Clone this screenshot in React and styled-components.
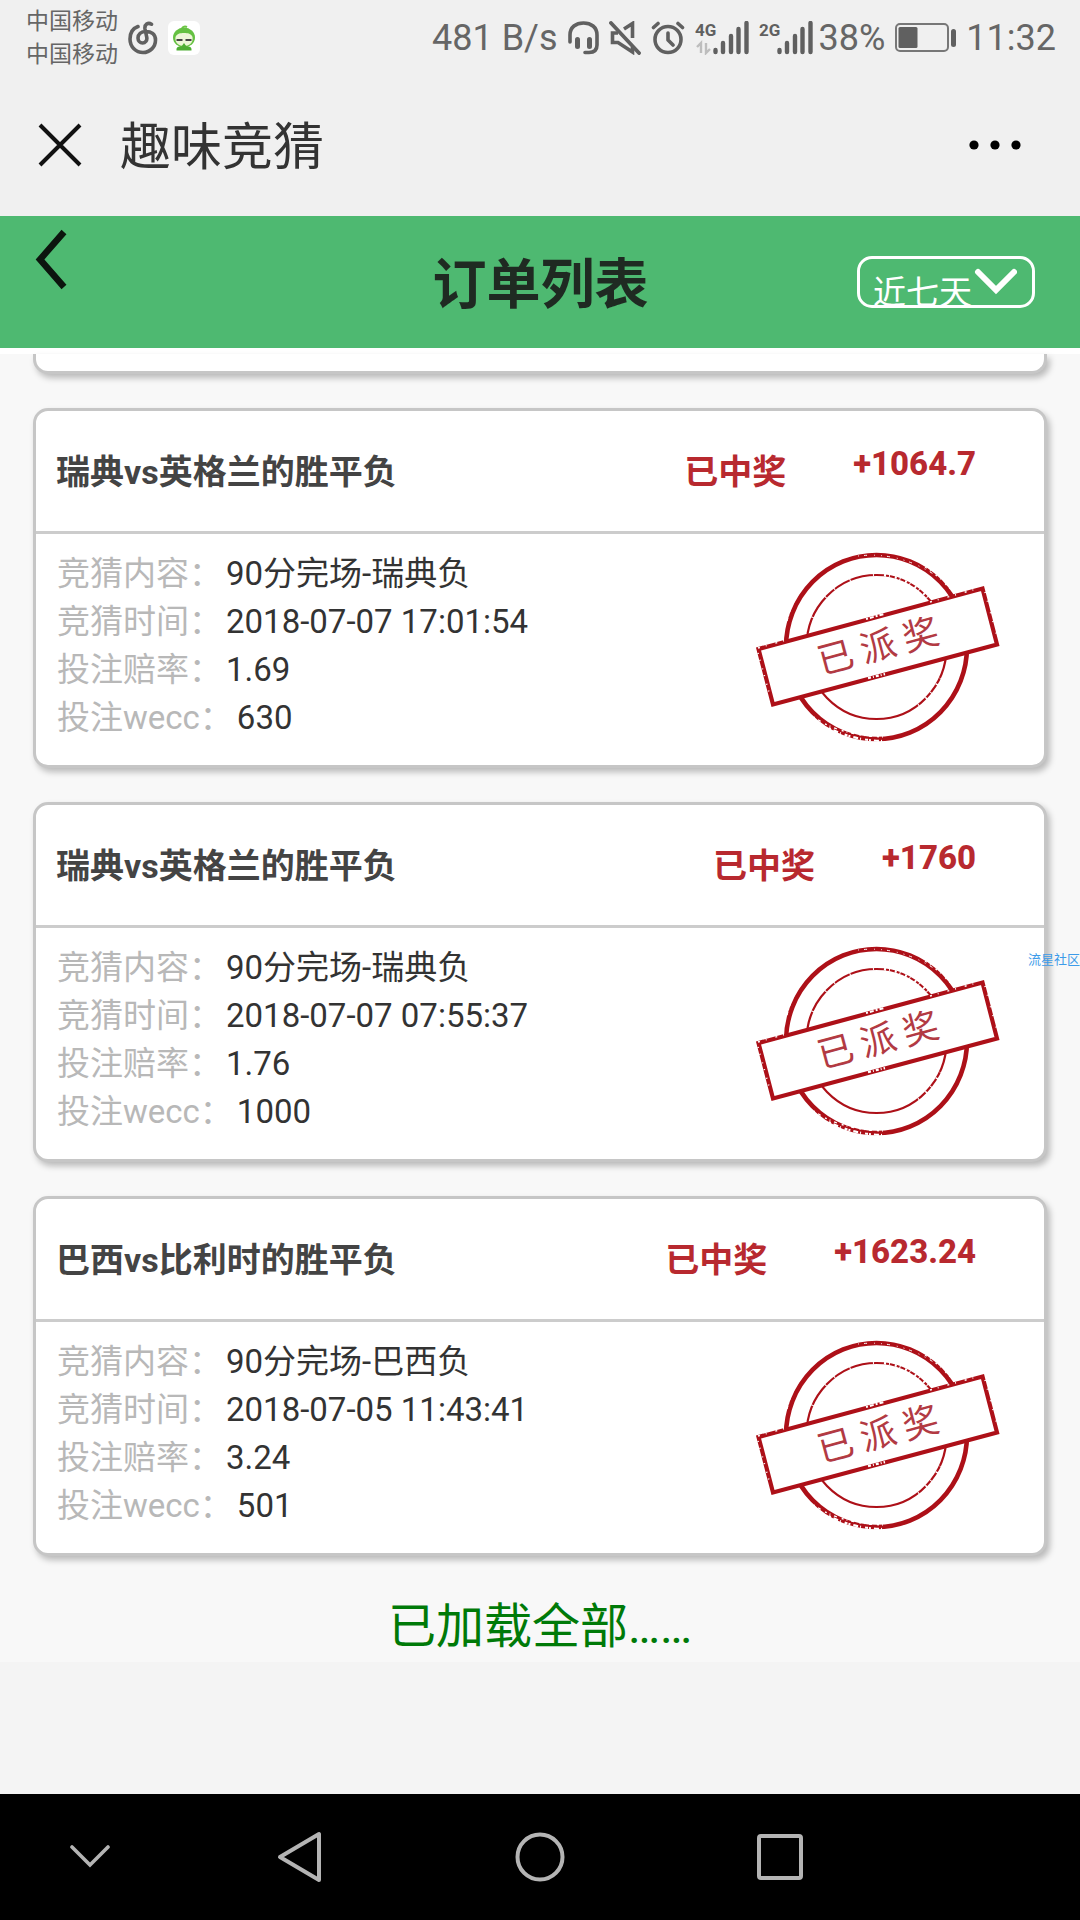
import React from 'react';
import styled, { createGlobalStyle } from 'styled-components';

const GlobalStyle = createGlobalStyle`
  * {
    box-sizing: border-box;
  }
  body {
    margin: 0;
    background: #f4f4f4;
    font-family: Roboto, 'Noto Sans CJK SC', sans-serif;
    color: #333;
  }
  button {
    padding: 0;
    border: none;
    background: none;
    display: flex;
    cursor: pointer;
  }
  svg {
    display: block;
    flex-shrink: 0;
  }
`;

const Page = styled.div`
  position: relative;
  min-height: 100vh;
  display: flex;
  flex-direction: column;
  overflow-x: hidden;
`;

const StatusBar = styled.div`
  height: 74px;
  padding: 2px 24px 0 26px;
  display: flex;
  align-items: center;
  justify-content: space-between;
  background: #f0f0f0;
  color: #666;
`;

const StatusGroup = styled.div`
  display: flex;
  align-items: center;
  gap: 10px;
`;

const Carriers = styled.div`
  font-size: 23px;
  line-height: 33px;
`;

const StatusText = styled.span`
  font-size: 36px;
  line-height: 44px;
  white-space: nowrap;
`;

const SignalGroup = styled.div`
  display: flex;
  align-items: center;
  gap: 6px;
`;

const AppBar = styled.header`
  height: 142px;
  padding: 0 59px 0 38px;
  display: flex;
  align-items: center;
  background: #f0f0f0;
`;

const AppTitle = styled.div`
  flex: 1;
  margin-left: 38px;
  padding-top: 6px;
  font-size: 51px;
  line-height: 72px;
`;

const Header = styled.div`
  height: 138px;
  padding: 0 45px 0 34px;
  display: grid;
  grid-template-columns: 1fr auto 1fr;
  align-items: center;
  background: #4eb971;
  border-bottom: 6px solid #fff;
`;

const BackButton = styled.button`
  align-self: start;
  justify-self: start;
  margin-top: 12px;
`;

const Title = styled.h1`
  margin: 0;
  padding: 8px 0 0 12px;
  font-size: 54px;
  line-height: 76px;
  color: #1f2a22;
`;

const RangeBox = styled.label`
  justify-self: end;
  width: 178px;
  height: 52px;
  padding: 0 15px 0 13px;
  display: flex;
  border: 3px solid #fff;
  border-radius: 15px;
`;

const RangeSelect = styled.select`
  appearance: none;
  flex: 1;
  min-width: 0;
  padding: 15px 0 0;
  border: none;
  outline: none;
  background: transparent;
  color: #fff;
  font-family: inherit;
  font-size: 33px;
  line-height: 38px;

  option {
    color: #333;
  }
`;

const List = styled.main`
  display: flex;
  flex-direction: column;
  gap: 34px;
  padding: 0 33px;
  background: #f8f8f8;
`;

const Card = styled.section`
  background: #fff;
  border: 3px solid #c6c6c6;
  border-radius: 15px;
  box-shadow: 3px 4px 6px rgba(0, 0, 0, 0.25);
`;

// bottom edge of the card scrolled under the header
const CardTail = styled(Card)`
  height: 20px;
  border-top: none;
  border-radius: 0 0 15px 15px;
`;

const CardHead = styled.div`
  height: 123px;
  padding: 36px 68px 0 20px;
  display: flex;
  align-items: flex-start;
  border-bottom: 3px solid #ccc;
`;

const CardTitle = styled.h2`
  flex: 1;
  margin: 0;
  font-size: 34px;
  line-height: 50px;
  color: #444;
`;

const State = styled.span`
  margin-right: 67px;
  font-size: 34px;
  font-weight: bold;
  line-height: 50px;
  color: #b8292f;
`;

const Amount = styled.span`
  font-size: 33px;
  font-weight: 800;
  line-height: 34px;
  color: #b8292f;
`;

const CardBody = styled.div`
  padding: 16px 40px 23px 21px;
  display: flex;
  justify-content: space-between;
`;

const Details = styled.dl`
  margin: 0;
  font-size: 33px;
  line-height: 48px;
`;

const Row = styled.div`
  display: flex;
  gap: 4px;
`;

const Label = styled.dt`
  color: #b8b8b8;
`;

const Value = styled.dd`
  margin: 0;
`;

const Loaded = styled.p`
  margin: 0;
  padding-top: 2px;
  font-size: 48px;
  line-height: 70px;
  text-align: center;
  color: #007a08;
`;

const Watermark = styled.span`
  position: absolute;
  top: 950px;
  right: 0;
  font-size: 13px;
  line-height: 20px;
  color: #3d9be9;
`;

const NavBar = styled.nav`
  height: 126px;
  margin-top: auto;
  display: grid;
  grid-template-columns: 3fr 4fr 4fr 4fr 3fr;
  align-items: center;
  justify-items: center;
  background: #000;
`;

const orders = [
  {
    title: '瑞典vs英格兰的胜平负',
    amount: '+1064.7',
    content: '90分完场-瑞典负',
    time: '2018-07-07 17:01:54',
    odds: '1.69',
    wecc: '630',
  },
  {
    title: '瑞典vs英格兰的胜平负',
    amount: '+1760',
    content: '90分完场-瑞典负',
    time: '2018-07-07 07:55:37',
    odds: '1.76',
    wecc: '1000',
  },
  {
    title: '巴西vs比利时的胜平负',
    amount: '+1623.24',
    content: '90分完场-巴西负',
    time: '2018-07-05 11:43:41',
    odds: '3.24',
    wecc: '501',
  },
];

const MusicIcon = () => (
  <svg width="30" height="34" viewBox="0 0 30 34" fill="none" stroke="#606060" strokeWidth="3.6" strokeLinecap="round">
    <path d="M10 5.500C4.500 7.500 2 12.500 2 18C2 26 8 31.500 15 31.500S27.500 26 27.500 19C27.500 13 23 10.500 18 10.500C13 10.500 10 13.500 10 17C10 20 12 22 14.600 22S19.300 19.700 18.800 16.500L17 8C16.300 3.500 20 1 23.500 3.200" />
  </svg>
);

const AvatarIcon = () => (
  <svg width="32" height="34" viewBox="0 0 32 34">
    <rect width="32" height="34" rx="6" fill="#fff" />
    <path d="M14 7.500C15 5.500 17 5 19 6" fill="none" stroke="#6cc644" strokeWidth="2" />
    <ellipse cx="16" cy="16.500" rx="11" ry="10" fill="#65c142" />
    <path d="M7.500 16C9 12.500 12 12 16 12S23 12.500 24.500 16C25.500 22 21 25 16 25S6.500 22 7.500 16Z" fill="#eef6d8" />
    <path d="M8.500 19h6M17.500 19h6" stroke="#444" strokeWidth="1.800" />
    <path d="M8.500 29.500C8 26 10 25 13.500 25.500L16 22L18.500 25.500C22 25 24 26 23.500 29.500Z" fill="#4fae34" />
  </svg>
);

const HeadsetIcon = () => (
  <svg width="31" height="34" viewBox="0 0 31 34" fill="none" stroke="#606060" strokeLinecap="round">
    <path d="M2 21V14C2 6 8 2 15.500 2S29 6 29 14V24C29 29 26 31.500 21 31.500H17" strokeWidth="3.600" />
    <path d="M9.500 18.500v7M21.500 18.500v7" strokeWidth="5" />
  </svg>
);

const MuteIcon = () => (
  <svg width="32" height="34" viewBox="0 0 32 34" fill="none" stroke="#606060" strokeWidth="3.600">
    <path d="M15 8L23.500 2.500V17M9 12H3.500V21.500H9L23.500 31V26" />
    <path d="M2 2L30 32" strokeWidth="3.800" strokeLinecap="round" />
  </svg>
);

const AlarmIcon = () => (
  <svg width="34" height="34" viewBox="0 0 34 34" fill="none" stroke="#606060" strokeWidth="3.600" strokeLinecap="round" strokeLinejoin="round">
    <circle cx="17" cy="18.500" r="13" />
    <path d="M17 12v7l5 5M2.500 6.500L7 2.500M31.500 6.500L27 2.500" />
  </svg>
);

const Signal = ({ type, data }) => (
  <svg width="54" height="34" viewBox="0 0 54 34">
    <text x="0" y="15" fontFamily="Roboto, sans-serif" fontSize="17" fontWeight="bold" fill="#606060">
      {type}
    </text>
    {data && (
      <path d="M6 32V22L2 26M11 22V32L15 28" fill="none" stroke="#bdbdbd" strokeWidth="2.400" />
    )}
    <path
      d="M20.500 29v2M28 22v9M36 15v16M43.500 8v23M51.500 2v29"
      stroke="#606060"
      strokeWidth="4.400"
      strokeLinecap="round"
    />
  </svg>
);

const BatteryIcon = () => (
  <svg width="61" height="30" viewBox="0 0 61 30">
    <rect x="1" y="1" width="52" height="27" rx="4" fill="none" stroke="#777" strokeWidth="2" />
    <rect x="3.500" y="4" width="19" height="21" rx="1.500" fill="#606060" />
    <rect x="56" y="6" width="5" height="18" rx="2.500" fill="#606060" />
  </svg>
);

const Stamp = () => (
  <svg width="252" height="192" viewBox="752 550 252 192" role="img" aria-label="已派奖">
    <g fill="none" stroke="#ad1018">
      <ellipse cx="876.500" cy="647" rx="90.500" ry="92" strokeWidth="4.600" />
      <ellipse cx="876.500" cy="647" rx="70" ry="72" strokeWidth="2.200" />
    </g>
    {/* worn ink */}
    <g fill="none" stroke="#fff">
      <path d="M829 728Q852 740 882 741" strokeWidth="2.200" strokeDasharray="2 3 5 2 1 4 3 1" />
      <path d="M814 717Q840 736 886 737" strokeWidth="1.400" strokeDasharray="1 4 3 5 2 3" />
      <path d="M787 621Q791 604 799 593" strokeWidth="1.400" strokeDasharray="3 2 1 3" />
      <path d="M858 556Q900 551 938 577" strokeWidth="1" strokeDasharray="1 5 3 7 1 6" />
      <path d="M925 567Q940 577 951 590" strokeWidth="1.200" strokeDasharray="2 4 1 6" />
      <path d="M806.500 647A70 72 0 0 1 890 576" strokeWidth="3" strokeDasharray="1 11 1 17 1 23" />
      <path d="M884 575Q912 579 932 602" strokeWidth="2.600" strokeDasharray="2 3 1 5" />
      <path d="M918 705Q932 696 940 678" strokeWidth="3" strokeDasharray="1 9 1.500 6" />
    </g>
    <path d="M758.500 649L982.500 588.500L997 644.500L773 704.500Z" fill="#fff" stroke="#ad1018" strokeWidth="4.200" />
    <g fill="none" stroke="#fff">
      <path d="M866 619L884 614" strokeWidth="2" strokeDasharray="2 2 4 2" />
      <path d="M868 678L885 674" strokeWidth="2.400" strokeDasharray="3 2 1 2" />
      <path d="M758 653L770 696" strokeWidth="1.600" strokeDasharray="1 6 1 8" />
      <path d="M985 592L998 640" strokeWidth="1.600" strokeDasharray="1 8 1 11" />
      <path d="M758 648L790 639M930 602L980 588" strokeWidth="1.400" strokeDasharray="2 6 1 9" />
    </g>
    <text
      transform="translate(878 646) rotate(-15)"
      y="13"
      textAnchor="middle"
      fontFamily="'Noto Sans CJK SC', sans-serif"
      fontSize="36"
      fill="#b23a43"
    >
      已 派 奖
    </text>
  </svg>
);

const OrderCard = ({ order }) => (
  <Card>
    <CardHead>
      <CardTitle>{order.title}</CardTitle>
      <State>已中奖</State>
      <Amount>{order.amount}</Amount>
    </CardHead>
    <CardBody>
      <Details>
        <Row>
          <Label>竞猜内容：</Label>
          <Value>{order.content}</Value>
        </Row>
        <Row>
          <Label>竞猜时间：</Label>
          <Value>{order.time}</Value>
        </Row>
        <Row>
          <Label>投注赔率：</Label>
          <Value>{order.odds}</Value>
        </Row>
        <Row>
          <Label>投注wecc：</Label>
          <Value>{order.wecc}</Value>
        </Row>
      </Details>
      <Stamp />
    </CardBody>
  </Card>
);

const App = () => {
  return (
    <Page>
      <GlobalStyle />
      <StatusBar>
        <StatusGroup>
          <Carriers>
            <div>中国移动</div>
            <div>中国移动</div>
          </Carriers>
          <MusicIcon />
          <AvatarIcon />
        </StatusGroup>
        <StatusGroup>
          <StatusText>481 B/s</StatusText>
          <HeadsetIcon />
          <MuteIcon />
          <AlarmIcon />
          <Signal type="4G" data />
          <SignalGroup>
            <Signal type="2G" />
            <StatusText>38%</StatusText>
          </SignalGroup>
          <BatteryIcon />
          <StatusText>11:32</StatusText>
        </StatusGroup>
      </StatusBar>

      <AppBar>
        <button aria-label="关闭">
          <svg width="44" height="44" viewBox="0 0 44 44" stroke="#111" strokeWidth="4">
            <path d="M2 2L42 42M42 2L2 42" />
          </svg>
        </button>
        <AppTitle>趣味竞猜</AppTitle>
        <button aria-label="更多">
          <svg width="52" height="10" viewBox="0 0 52 10">
            <circle cx="5" cy="5" r="4.600" />
            <circle cx="26" cy="5" r="4.600" />
            <circle cx="47" cy="5" r="4.600" />
          </svg>
        </button>
      </AppBar>

      <Header>
        <BackButton aria-label="返回">
          <svg width="34" height="64" viewBox="0 0 34 64" fill="none" stroke="#0c150e" strokeWidth="6.500">
            <path d="M30 4L6 31.500L30 59" />
          </svg>
        </BackButton>
        <Title>订单列表</Title>
        <RangeBox>
          <RangeSelect aria-label="时间范围" defaultValue="7">
            <option value="7">近七天</option>
            <option value="30">近一月</option>
          </RangeSelect>
          <svg width="44" height="46" viewBox="0 0 44 46" fill="none" stroke="#fff" strokeWidth="6" strokeLinecap="round">
            <path d="M5 13L23 31L41 13" />
          </svg>
        </RangeBox>
      </Header>

      <List>
        <CardTail />
        {orders.map((order) => (
          <OrderCard key={order.time} order={order} />
        ))}
        <Loaded>已加载全部……</Loaded>
      </List>
      <Watermark>流星社区</Watermark>

      <NavBar>
        <button aria-label="收起">
          <svg width="40" height="24" viewBox="0 0 40 24" fill="none" stroke="#b4b4b4" strokeWidth="3.6" strokeLinecap="round">
            <path d="M2 2L20 20L38 2" />
          </svg>
        </button>
        <button aria-label="后退">
          <svg width="46" height="52" viewBox="0 0 46 52" fill="none" stroke="#b4b4b4" strokeWidth="4" strokeLinejoin="round">
            <path d="M42 3V49L3 26Z" />
          </svg>
        </button>
        <button aria-label="主页">
          <svg width="50" height="50" viewBox="0 0 50 50" fill="none" stroke="#b4b4b4" strokeWidth="4">
            <circle cx="25" cy="25" r="22.500" />
          </svg>
        </button>
        <button aria-label="任务">
          <svg width="46" height="46" viewBox="0 0 46 46" fill="none" stroke="#b4b4b4" strokeWidth="4">
            <rect x="2" y="2" width="42" height="42" rx="2" />
          </svg>
        </button>
      </NavBar>
    </Page>
  );
};

export default App;
